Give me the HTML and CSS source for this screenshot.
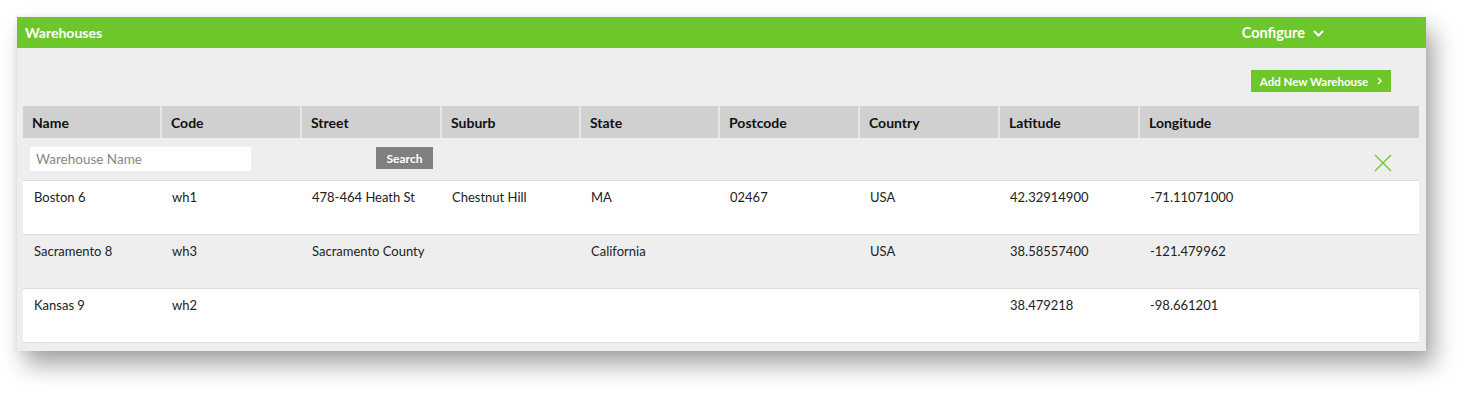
FILE: index.html
```html
<!DOCTYPE html>
<html lang="en">
<head>
    <meta charset="UTF-8">
    <title>Warehouses</title>
    <link rel="stylesheet" href="styles.css">
</head>
<body>
<div class="panel">
    <div class="panel-head">
        <span class="panel-title">Warehouses</span>
        <span class="configure">Configure
            <svg class="chev-down" width="11" height="7" viewBox="0 0 11 7"><path d="M1 1l4.5 4.5L10 1" fill="none" stroke="#fff" stroke-width="2"/></svg>
        </span>
    </div>
    <div class="panel-body">
        <div class="toolbar">
            <button class="btn-add">Add New Warehouse
                <svg width="5" height="8" viewBox="0 0 5 8"><path d="M1 1l3 3-3 3" fill="none" stroke="#fff" stroke-width="1.4"/></svg>
            </button>
        </div>
        <table class="grid">
            <colgroup>
                <col style="width:138px"><col style="width:140px"><col style="width:140px">
                <col style="width:139px"><col style="width:139px"><col style="width:140px">
                <col style="width:140px"><col style="width:140px"><col>
            </colgroup>
            <thead>
            <tr>
                <th>Name</th><th>Code</th><th>Street</th><th>Suburb</th><th>State</th>
                <th>Postcode</th><th>Country</th><th>Latitude</th><th>Longitude</th>
            </tr>
            </thead>
            <tbody>
            <tr class="filter-row">
                <td colspan="2"><input class="filter-input" type="text" placeholder="Warehouse Name"></td>
                <td><button class="btn-search">Search</button></td>
                <td colspan="5"></td>
                <td class="clear-cell">
                    <svg class="clear-x" width="18" height="18" viewBox="0 0 18 18"><path d="M1 1l16 16M17 1L1 17" stroke="#6ec72a" stroke-width="1.3"/></svg>
                </td>
            </tr>
            <tr class="row">
                <td>Boston 6</td><td>wh1</td><td>478-464 Heath St</td><td>Chestnut Hill</td><td>MA</td>
                <td>02467</td><td>USA</td><td>42.32914900</td><td>-71.11071000</td>
            </tr>
            <tr class="row alt">
                <td>Sacramento 8</td><td>wh3</td><td>Sacramento County</td><td></td><td>California</td>
                <td></td><td>USA</td><td>38.58557400</td><td>-121.479962</td>
            </tr>
            <tr class="row">
                <td>Kansas 9</td><td>wh2</td><td></td><td></td><td></td>
                <td></td><td></td><td>38.479218</td><td>-98.661201</td>
            </tr>
            </tbody>
        </table>
    </div>
</div>
</body>
</html>
```

FILE: styles.css
```css
html {
    background: #fff;
}

body {
    margin: 0;
    min-height: 401px;
    box-sizing: border-box;
    padding: 17px 0 0 17px;
    font-family: Lato, "Noto Sans", sans-serif;
    color: #222;
}

.panel {
    width: 1409px;
    background: #eeeeee;
    box-shadow: 8px 14px 22px rgba(0, 0, 0, 0.35), 0 0 6px rgba(0, 0, 0, 0.08);
}

.panel-head {
    height: 31px;
    background: #6ec72a;
    color: #fff;
    display: flex;
    align-items: center;
    justify-content: space-between;
    padding: 0 102px 0 8px;
    font-weight: bold;
    font-size: 14px;
}

.configure {
    display: flex;
    align-items: center;
    gap: 8px;
    font-size: 14.5px;
}

.chev-down {
    margin-top: 2px;
}

.panel-body {
    padding: 0 7px 8px 6px;
}

.toolbar {
    height: 58px;
    display: flex;
    justify-content: flex-end;
    align-items: flex-start;
    padding-right: 28px;
}

.btn-add {
    margin-top: 22px;
    width: 140px;
    height: 22px;
    background: #6ec72a;
    color: #fff;
    border: 0;
    font-family: inherit;
    font-weight: bold;
    font-size: 11.5px;
    display: flex;
    align-items: center;
    justify-content: center;
    gap: 9px;
    padding: 0;
}

.grid {
    width: 1396px;
    table-layout: fixed;
    border-collapse: collapse;
}

.grid th {
    height: 31px;
    background: #d0d0d0;
    text-align: left;
    font-size: 14px;
    font-weight: bold;
    color: #111;
    padding: 1px 0 0 9px;
    border-left: 2px solid #e6e6e6;
}

.grid th:first-child {
    border-left: 0;
}

.filter-row td {
    height: 42px;
    border-bottom: 1px solid #dcdcdc;
    padding: 0;
}

.filter-input {
    display: block;
    margin-left: 7px;
    width: 221px;
    height: 24px;
    box-sizing: border-box;
    border: 0;
    padding: 0 6px;
    font-family: inherit;
    font-size: 13.5px;
    background: #fff;
}

.filter-input::placeholder {
    color: #888;
}

.btn-search {
    display: block;
    margin-left: 75px;
    margin-top: -2px;
    width: 57px;
    height: 22px;
    background: #808080;
    color: #fff;
    border: 0;
    font-family: inherit;
    font-weight: bold;
    font-size: 12px;
    padding: 0;
}

.clear-cell {
    text-align: right;
}

.clear-x {
    display: inline-block;
    margin: 11px 27px 0 0;
}

.row td {
    height: 54px;
    vertical-align: top;
    padding: 8px 0 0 11px;
    box-sizing: border-box;
    font-size: 13px;
    color: #222;
    background: #fff;
    border-bottom: 1px solid #dcdcdc;
}

.row.alt td {
    background: #eeeeee;
}
```
